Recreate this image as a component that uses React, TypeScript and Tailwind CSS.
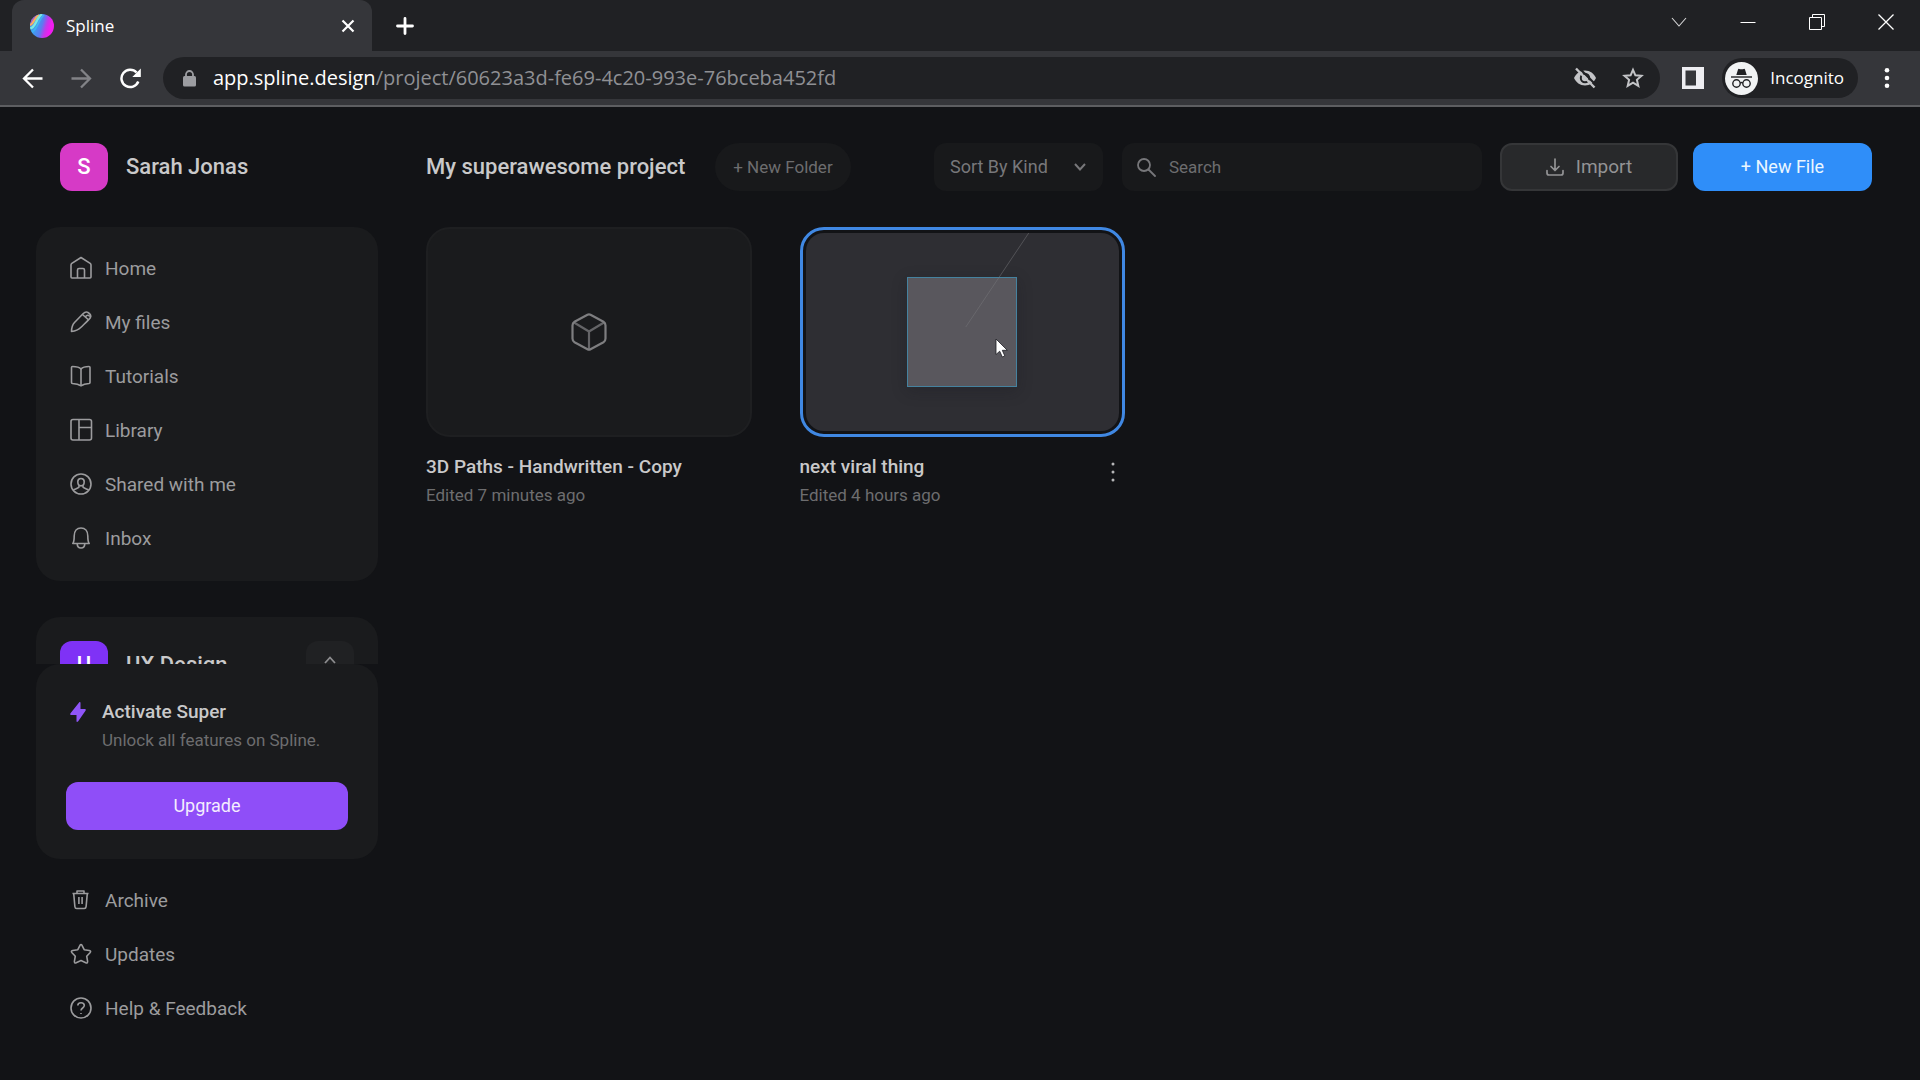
import type { ReactNode } from 'react'

type NavItem = {
  label: string
  icon: ReactNode
}

type ProjectFile = {
  name: string
  edited: string
  selected: boolean
}

const FILES: ProjectFile[] = [
  { name: '3D Paths - Handwritten - Copy', edited: 'Edited 7 minutes ago', selected: false },
  { name: 'next viral thing', edited: 'Edited 4 hours ago', selected: true },
]

const MAIN_NAV: NavItem[] = [
  {
    label: 'Home',
    icon: (
      <>
        <path d="M1 8 Q1 7 1.800 6.400 L11 0.500 L20.200 6.400 Q21 7 21 8 V20 Q21 21 20 21 H2 Q1 21 1 20 Z" />
        <path d="M7.500 21 V13 Q7.500 11.500 9 11.500 H13 Q14.500 11.500 14.500 13 V21" />
      </>
    ),
  },
  {
    label: 'My files',
    icon: (
      <>
        <path d="M1.500 20.500 C1.600 16.500 2.400 13.700 4.500 11.500 L13 2.800 C14.500 1.300 16.300 0.500 18 1.500 C19.800 2.600 21.800 4.600 20.300 6.800 C19 8.700 14 13.300 11 16.300 C8.500 18.900 5.500 20.200 1.500 20.500 Z" />
        <path d="M12.500 3.500 L18.700 9 M15.700 5.500 Q17.500 3 20 5.500" />
      </>
    ),
  },
  {
    label: 'Tutorials',
    icon: (
      <>
        <path d="M11 4 C9 1.800 6 1.500 2.500 1.500 Q1.500 1.500 1.500 2.500 V17.500 Q1.500 18.300 2.500 18.500 C6 18.800 8.500 19.300 11 20.800 C13.500 19.300 16 18.800 19 18.500 Q20 18.300 20 17.500 V2.500 Q20 1.500 19 1.500 C16 1.500 13 1.800 11 4 Z" />
        <path d="M11 4 V20.500" />
      </>
    ),
  },
  {
    label: 'Library',
    icon: (
      <>
        <rect x="1" y="0.500" width="20.500" height="20.500" rx="2" />
        <path d="M9 0.500 V21 M9 8.500 H21.500" />
      </>
    ),
  },
  {
    label: 'Shared with me',
    icon: (
      <>
        <circle cx="11" cy="11" r="10" />
        <path d="M11 5.500 C13.200 5.500 14.200 6.700 14.200 8.800 C14.200 11.200 12.800 12.900 11 12.900 C9.200 12.900 7.800 11.200 7.800 8.800 C7.800 6.700 8.800 5.500 11 5.500 Z" />
        <path d="M3.500 16.800 C5.500 15.800 8.300 15.200 9 14 V12.400 M18.500 16.800 C16.500 15.800 13.700 15.200 13 14 V12.400" />
      </>
    ),
  },
  {
    label: 'Inbox',
    icon: (
      <>
        <path d="M2.800 16.500 C4 15 4.200 12.500 4.200 9 C4.200 4 7 1 11 1 C15 1 17.800 4 17.800 9 C17.800 12.500 18 15 19.200 16.500 Z" />
        <path d="M7.200 16.500 C7.200 19.500 8.700 21 11 21 C13.300 21 14.800 19.500 14.800 16.500" />
      </>
    ),
  },
]

const FOOTER_NAV: NavItem[] = [
  {
    label: 'Archive',
    icon: (
      <>
        <path d="M2.500 4.500 H18.500 M7 4.300 V2 H14 V4.300" />
        <path d="M3.700 4.500 L4.900 17.700 Q5.100 19.500 6.700 19.500 H14.300 Q15.900 19.500 16.100 17.700 L17.300 4.500 M8.900 8 V15 M12.100 8 V15" />
      </>
    ),
  },
  {
    label: 'Updates',
    icon: (
      <path d="M10 2.300 Q11 0.800 12 2.300 L14.200 6.700 L19.300 7.500 Q21.500 8 20 9.700 L16.700 13.200 L17.600 18.300 Q17.700 20.500 15.800 19.700 L11 17.500 L6.200 19.700 Q4.300 20.500 4.400 18.300 L5.300 13.200 L2 9.700 Q0.500 8 2.700 7.500 L7.800 6.700 Z" />
    ),
  },
  {
    label: 'Help & Feedback',
    icon: (
      <>
        <circle cx="11" cy="11" r="10" />
        <path d="M7.800 8.600 C7.800 4.700 14.300 4.700 14.300 8.600 C14.300 11 11 11 11 13.500 M11 16 V17" />
      </>
    ),
  },
]

export default function App() {
  return (
    <div className="flex h-screen flex-col overflow-hidden bg-[#121316] font-[Roboto,sans-serif] text-[#c9c9ca]">
      <BrowserChrome />
      <div className="flex min-h-0 flex-1 pt-9">
        <Sidebar />
        <main className="min-w-0 flex-1 px-12">
          <Toolbar />
          <div className="mt-9 grid grid-cols-4 gap-12">
            {FILES.map(file => (
              <FileCard key={file.name} file={file} />
            ))}
          </div>
        </main>
      </div>
    </div>
  )
}

function BrowserChrome() {
  return (
    <header className="shrink-0 border-b-2 border-[#5d5e61] bg-[#35363a] font-['Open_Sans','Noto_Sans',sans-serif] text-white">
      {/* Tab strip */}
      <div className="flex h-[51px] bg-[#202124] pl-3">
        <div className="flex w-[360px] items-center rounded-t-xl bg-[#35363a] pr-[17px] pl-[18px]">
          <SplineLogo />
          <span className="ml-3 flex-1 text-[17px]">Spline</span>
          <button aria-label="Close tab">
            <svg width="14" height="14" viewBox="0 0 14 14" fill="none" stroke="#fff" strokeWidth="2.200">
              <path d="M1.500 1.500 L12.500 12.500 M12.500 1.500 L1.500 12.500" />
            </svg>
          </button>
        </div>
        <button aria-label="New tab" className="ml-6">
          <svg width="18" height="18" viewBox="0 0 18 18" fill="none" stroke="#fff" strokeWidth="2.800" strokeLinecap="round">
            <path d="M9 1.500 V16.500 M1.500 9 H16.500" />
          </svg>
        </button>
        <div className="mb-2 ml-auto flex items-center gap-[53px] pr-[26px]">
          <button aria-label="Search tabs">
            <svg width="16" height="16" viewBox="0 0 16 16" fill="none" stroke="#d5d5d6" strokeWidth="1.100">
              <path d="M1 4 L8 12 L15 4" />
            </svg>
          </button>
          <button aria-label="Minimize">
            <svg width="16" height="16" viewBox="0 0 16 16" fill="none" stroke="#fff" strokeWidth="1">
              <path d="M0.500 8.500 H15.500" />
            </svg>
          </button>
          <button aria-label="Restore">
            <svg width="16" height="16" viewBox="0 0 16 16" fill="none" stroke="#fff" strokeWidth="1">
              <path d="M0.500 3.500 H12.500 V15.500 H0.500 Z M3.500 3.500 V0.500 H15.500 V12.500 H12.500" />
            </svg>
          </button>
          <button aria-label="Close window">
            <svg width="16" height="16" viewBox="0 0 16 16" fill="none" stroke="#fff" strokeWidth="1.300">
              <path d="M0.500 0.500 L15.500 15.500 M15.500 0.500 L0.500 15.500" />
            </svg>
          </button>
        </div>
      </div>

      {/* Address bar */}
      <div className="flex h-[54px] items-center pr-[30px] pl-[22px]">
        <div className="flex gap-7">
          <button aria-label="Back">
            <svg width="21" height="21" viewBox="0 0 21 21" fill="none" stroke="#fff" strokeWidth="2.300">
              <path d="M20.500 10.500 H2 M11 1.500 L2 10.500 L11 19.500" />
            </svg>
          </button>
          <button aria-label="Forward">
            <svg width="21" height="21" viewBox="0 0 21 21" fill="none" stroke="#828387" strokeWidth="2.300">
              <path d="M0.500 10.500 H19 M10 1.500 L19 10.500 L10 19.500" />
            </svg>
          </button>
          <button aria-label="Reload">
            <svg width="21" height="21" viewBox="0 0 21 21" fill="none" stroke="#fff" strokeWidth="2.500">
              <path d="M18.300 13.500 A8.700 8.700 0 1 1 16.600 4.500" />
              <path d="M20.800 0.500 V9 H12.300 Z" fill="#fff" stroke="none" />
            </svg>
          </button>
        </div>
        <div className="ml-[22px] flex h-[42px] min-w-0 flex-1 items-center rounded-full bg-[#202124] pr-4 pl-5">
          <svg width="13" height="17" viewBox="0 0 13 17" className="shrink-0">
            <path d="M3 7 V4.500 A3.500 3.500 0 0 1 10 4.500 V7" fill="none" stroke="#9c9da1" strokeWidth="1.800" />
            <rect y="6" width="13" height="10.500" rx="1.500" fill="#9c9da1" />
          </svg>
          <a href="#project" className="ml-[17px] truncate text-xl text-[#8f9094]">
            <span className="text-white">app.spline.design</span>/project/60623a3d-fe69-4c20-993e-76bceba452fd
          </a>
          <button aria-label="Third-party cookies blocked" className="ml-auto shrink-0">
            <svg width="24" height="22" viewBox="0 0 24 22" fill="none">
              <path d="M1 11 C3 6.500 7 3.500 12 3.500 C17 3.500 21 6.500 23 11 C21 15.500 17 18.500 12 18.500 C7 18.500 3 15.500 1 11 Z" fill="#c3c4c7" />
              <circle cx="12" cy="11" r="4.200" stroke="#202124" strokeWidth="2" />
              <path d="M5.500 0.500 L23 18" stroke="#202124" strokeWidth="2.200" />
              <path d="M3 1.500 L21.500 20.500" stroke="#c3c4c7" strokeWidth="2.400" />
            </svg>
          </button>
          <button aria-label="Bookmark this tab" className="ml-[25px] shrink-0">
            <svg width="22" height="22" viewBox="0 0 22 22" fill="none" stroke="#c3c4c7" strokeWidth="2">
              <path d="M11 2.800 L13.400 8.300 L19.500 8.800 L14.900 12.800 L16.300 18.800 L11 15.600 L5.700 18.800 L7.100 12.800 L2.500 8.800 L8.600 8.300 Z" />
            </svg>
          </button>
        </div>
        <button aria-label="Side panel" className="ml-[22px]">
          <svg width="22" height="22" viewBox="0 0 22 22">
            <path d="M0 0 H22 V22 H0 Z M3.500 3.500 V18.500 H14 V3.500 Z" fill="#eeeef2" fillRule="evenodd" />
          </svg>
        </button>
        <button className="ml-[18px] flex h-10 items-center gap-3 rounded-full bg-[#202124] pr-[14px] pl-[3px] text-[17px]">
          <svg width="33" height="33" viewBox="0 0 33 33" fill="none">
            <circle cx="16.500" cy="16.500" r="16.500" fill="#f1f3f4" />
            <path d="M11.300 13 L13 7.500 Q13.300 6.500 14.300 6.900 Q16.500 7.600 18.700 6.900 Q19.700 6.500 20 7.500 L21.700 13 Z" fill="#202124" />
            <path d="M6 15 H27" stroke="#202124" strokeWidth="1.400" />
            <circle cx="11.500" cy="21.500" r="3.700" stroke="#202124" strokeWidth="1.400" />
            <circle cx="21.500" cy="21.500" r="3.700" stroke="#202124" strokeWidth="1.400" />
            <path d="M15.200 21 Q16.500 20 17.800 21" stroke="#202124" strokeWidth="1.400" />
          </svg>
          Incognito
        </button>
        <button aria-label="Browser menu" className="ml-[26px]">
          <svg width="6" height="22" viewBox="0 0 6 22" fill="#fff">
            <circle cx="3" cy="3.200" r="2.300" />
            <circle cx="3" cy="11" r="2.300" />
            <circle cx="3" cy="18.800" r="2.300" />
          </svg>
        </button>
      </div>
    </header>
  )
}

function SplineLogo() {
  return (
    <svg width="24" height="24" viewBox="0 0 24 24">
      <defs>
        <linearGradient id="logo-base" x1="0" y1="0.300" x2="1" y2="0.600">
          <stop offset="0.250" stopColor="#3f9df0" />
          <stop offset="0.500" stopColor="#5a7cf0" />
          <stop offset="0.680" stopColor="#c437ea" />
          <stop offset="0.850" stopColor="#f01df0" />
        </linearGradient>
        <clipPath id="logo-clip">
          <circle cx="12" cy="12" r="12" />
        </clipPath>
      </defs>
      <g clipPath="url(#logo-clip)" fill="none">
        <rect width="24" height="24" fill="url(#logo-base)" />
        <path d="M-1 12 C3 12 4 9 5 6 C6 3 8 1 11 -1 H-1 Z" fill="#b45cc0" />
        <path d="M0 11 C4 10 4.500 3 9 1" stroke="#f3b35f" strokeWidth="2" />
        <path d="M0 14.500 C6 13.500 6 4 12 0" stroke="#7be9e0" strokeWidth="2.400" />
        <path d="M2 18 C8 15 8 6 14 1" stroke="#3fb5f2" strokeWidth="1.600" />
      </g>
    </svg>
  )
}

function Sidebar() {
  return (
    <aside className="flex w-[378px] shrink-0 flex-col pb-11 pl-9">
      <div className="flex min-h-0 flex-1 flex-col overflow-hidden">
        <div className="flex shrink-0 items-center gap-[18px] pl-6">
          <Avatar letter="S" color="bg-[#d63ac6]" />
          <span className="text-[22px] leading-7 font-medium">Sarah Jonas</span>
        </div>
        <nav className="mt-9 shrink-0 rounded-3xl bg-[#1a1b1d] py-[15px]">
          <NavList items={MAIN_NAV} />
        </nav>
        <section className="mt-9 flex shrink-0 items-center gap-[18px] rounded-3xl bg-[#1a1b1d] p-6">
          <Avatar letter="U" color="bg-[#7f32f6]" />
          <span className="flex-1 text-[22px] leading-7 font-medium">UX Design</span>
          <button aria-label="Collapse team" className="flex size-12 justify-center rounded-xl bg-[#202123] pt-[15px]">
            <svg width="12" height="8" viewBox="0 0 12 8" fill="none" stroke="#8d8d8f" strokeWidth="1.800">
              <path d="M1 7 L6 1.500 L11 7" />
            </svg>
          </button>
        </section>
      </div>

      <section className="shrink-0 rounded-3xl bg-[#1a1b1d] px-[30px] pt-[34px] pb-[29px]">
        <div className="flex gap-[14px] pl-1">
          <svg width="18" height="28" viewBox="0 0 18 28" fill="#8f55f8">
            <path d="M9.500 4 Q10.500 3.500 10.500 5 V11 H15 Q16.300 11.300 15.500 12.800 L8 23.500 Q6.500 24.500 6.500 23 V17 H1 Q-0.300 16.700 0.500 15.200 Z" />
          </svg>
          <div>
            <h2 className="text-[19px] leading-7 font-medium">Activate Super</h2>
            <p className="text-[17px] leading-7 text-[#6d6d6f]">Unlock all features on Spline.</p>
          </div>
        </div>
        <button className="mt-7 h-12 w-full rounded-xl bg-[#8f4ef8] text-lg text-[#f4edfe]">Upgrade</button>
      </section>

      <nav className="mt-[15px] shrink-0">
        <NavList items={FOOTER_NAV} />
      </nav>
    </aside>
  )
}

function Avatar({ letter, color }: { letter: string; color: string }) {
  return (
    <div className={`flex size-12 items-center justify-center rounded-xl text-[22px] leading-7 font-medium text-white ${color}`}>
      {letter}
    </div>
  )
}

function NavList({ items }: { items: NavItem[] }) {
  return (
    <ul>
      {items.map(item => (
        <li key={item.label}>
          <a href="#nav" className="flex h-[54px] items-center gap-[13px] pl-[34px] text-[19px] text-[#9c9c9e]">
            <svg
              width="22"
              height="24"
              viewBox="0 0 22 24"
              fill="none"
              stroke="currentColor"
              strokeWidth="1.600"
              strokeLinejoin="round"
              className="overflow-visible"
            >
              {item.icon}
            </svg>
            {item.label}
          </a>
        </li>
      ))}
    </ul>
  )
}

function Toolbar() {
  return (
    <div className="flex h-12 items-center text-lg">
      <h1 className="text-[22px] font-medium whitespace-nowrap">My superawesome project</h1>
      <button className="ml-[30px] h-12 rounded-full bg-[#18191b] px-[18px] text-[17px] whitespace-nowrap text-[#6d6d6f]">
        + New Folder
      </button>
      <div className="relative ml-auto h-12 shrink-0">
        <select
          aria-label="Sort files"
          className="h-12 w-[169px] appearance-none rounded-xl bg-[#18191b] pl-4 text-[#77777a]"
        >
          <option>Sort By Kind</option>
        </select>
        <svg
          width="12"
          height="8"
          viewBox="0 0 12 8"
          fill="none"
          stroke="#77777a"
          strokeWidth="2"
          className="pointer-events-none absolute top-5 right-[17px]"
        >
          <path d="M1 1 L6 6.500 L11 1" />
        </svg>
      </div>
      <label className="ml-[19px] flex h-12 w-[360px] items-center gap-[13px] rounded-xl bg-[#18191b] px-[15px]">
        <svg width="19" height="19" viewBox="0 0 19 19" fill="none" stroke="#77777a" strokeWidth="1.800" strokeLinecap="round">
          <circle cx="7" cy="7" r="6" />
          <path d="M11.500 11.500 L18 18" />
        </svg>
        <input
          type="search"
          aria-label="Search"
          placeholder="Search"
          className="min-w-0 flex-1 bg-transparent text-[17px] outline-none placeholder:text-[#6d6d6f]"
        />
      </label>
      <button className="ml-[18px] flex h-12 w-[178px] items-center justify-center gap-3 rounded-xl border-2 border-[#353638] bg-[#28292b] text-[19px] text-[#939395]">
        <svg width="18" height="18" viewBox="0 0 18 18" fill="none" stroke="currentColor" strokeWidth="1.700" strokeLinecap="round" strokeLinejoin="round">
          <path d="M9 1 V12 M5 8.500 L9 12.500 L13 8.500 M1 12.500 V15 Q1 17 3 17 H15 Q17 17 17 15 V12.500" />
        </svg>
        Import
      </button>
      <button className="ml-[15px] h-12 w-[179px] rounded-xl bg-[#2f8ef9] text-[#eaf6ff]">+ New File</button>
    </div>
  )
}

function FileCard({ file }: { file: ProjectFile }) {
  return (
    <article>
      {file.selected ? (
        <div className="relative h-[210px] rounded-3xl border-[3px] border-[#4088e3] p-[3px]">
          <div className="relative flex h-full items-center justify-center overflow-hidden rounded-[18px] bg-[#2e2e33]">
            <div className="size-[110px] border border-[#45829f] bg-[#59575d] shadow-[0_4px_14px_rgba(20,20,28,0.25)]" />
            <svg className="absolute inset-0 size-full" viewBox="0 0 314 198" preserveAspectRatio="xMidYMid slice" fill="none">
              <path d="M160 94 L223 0" stroke="#77777b" strokeOpacity="0.500" strokeWidth="1" />
            </svg>
          </div>
          {/* Pointer */}
          <svg width="14" height="20" viewBox="0 0 14 20" className="absolute top-[108px] left-[192px]">
            <path d="M1 1 V16.500 L4.700 13.200 L7.300 19 L9.800 17.900 L7.300 12.300 H12.300 Z" fill="#fff" stroke="#1c1c22" strokeWidth="0.800" />
          </svg>
        </div>
      ) : (
        <div className="flex h-[210px] items-center justify-center rounded-3xl border-2 border-[#1e1f21] bg-[#1a1b1d]">
          <svg width="36" height="38" viewBox="0 0 36 38" fill="none" stroke="#7e7e80" strokeWidth="2.200" strokeLinejoin="round">
            <path d="M3 9.500 L18 18.500 L33 9.500 M18 18.500 V36" strokeOpacity="0.750" />
            <path d="M16.500 1.800 Q18 1 19.500 1.800 L32.500 8.800 Q34.500 10 34.500 12.500 V25.500 Q34.500 28 32.500 29.200 L19.500 36.200 Q18 37 16.500 36.200 L3.500 29.200 Q1.500 28 1.500 25.500 V12.500 Q1.500 10 3.500 8.800 Z" />
          </svg>
        </div>
      )}
      <div className="mt-4 flex justify-between">
        <div>
          <h3 className="text-[19px] leading-7 font-medium">{file.name}</h3>
          <p className="text-[17px] leading-7 text-[#6d6d6f]">{file.edited}</p>
        </div>
        {file.selected && (
          <button aria-label="File options" className="mt-[9px] mr-[10px] self-start">
            <svg width="4" height="20" viewBox="0 0 4 20" fill="#b5b5b7">
              <circle cx="2" cy="2" r="1.500" />
              <circle cx="2" cy="10" r="1.500" />
              <circle cx="2" cy="18" r="1.500" />
            </svg>
          </button>
        )}
      </div>
    </article>
  )
}
